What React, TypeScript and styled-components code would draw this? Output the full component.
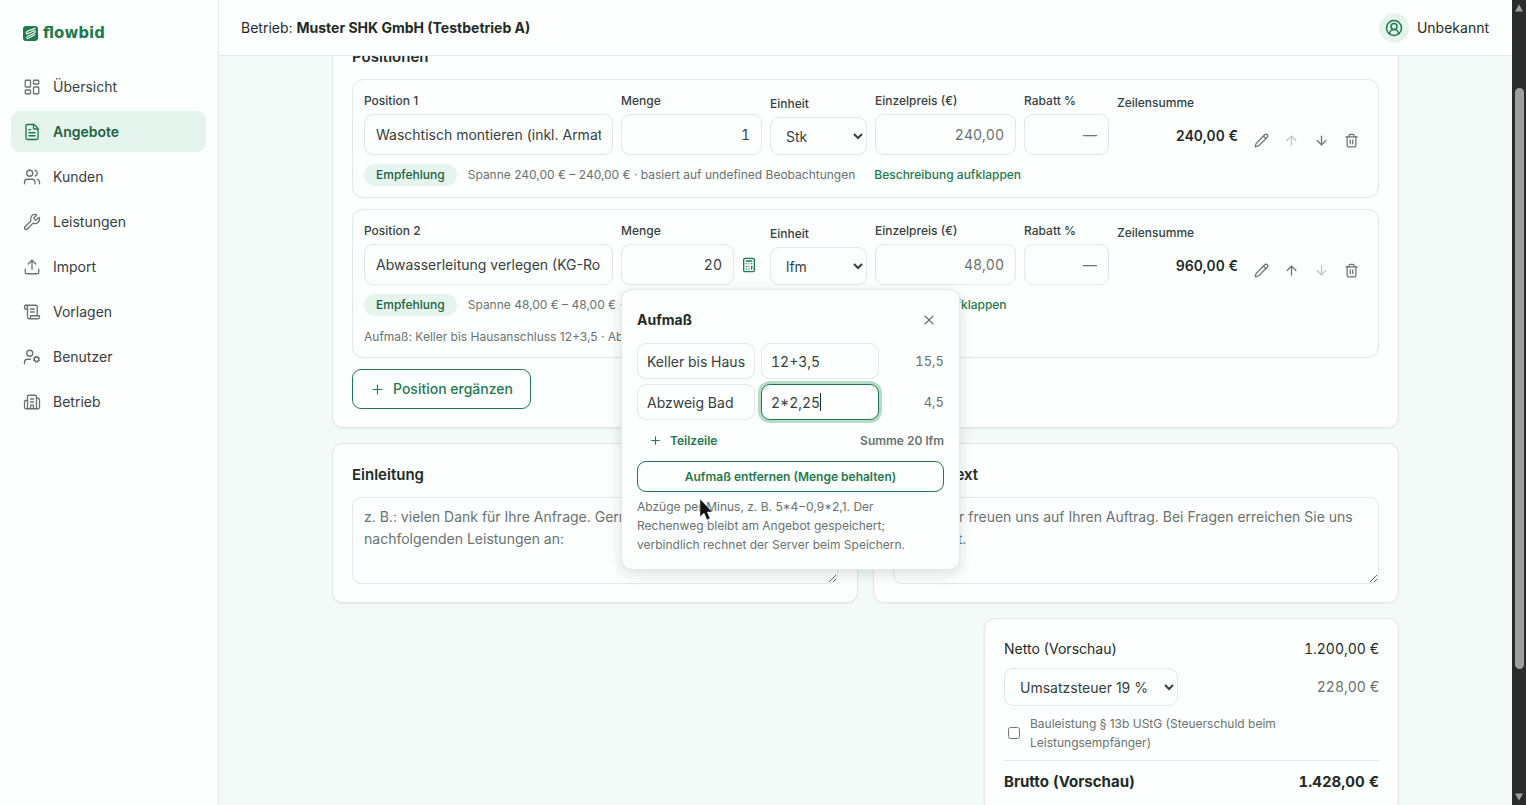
import React, { useState } from "react";
import styled, { createGlobalStyle, css } from "styled-components";
import {
  ArrowDown,
  ArrowUp,
  Building2,
  Calculator,
  CircleUserRound,
  FileText,
  LayoutDashboard,
  Pencil,
  Plus,
  ScrollText,
  Trash2,
  Upload,
  UserCog,
  Users,
  Wrench,
  X,
} from "lucide-react";

const color = {
  ink: "#1e2b27",
  soft: "#36413e",
  muted: "#69736f",
  line: "#e1e8e5",
  green: "#1f7a4d",
  mint: "#e5f4ec",
  surface: "#fdfefe",
  page: "#f3faf7",
};

const Global = createGlobalStyle`
  *, *::before, *::after { box-sizing: border-box; }
  body { margin: 0; background: ${color.page}; }
  body, button, input, select, textarea {
    font-family: Inter, "Liberation Sans", sans-serif;
    font-size: 14px;
    line-height: 22px;
    color: ${color.ink};
  }
`;

const Shell = styled.div`
  display: flex;
  height: 100vh;
  overflow: hidden;
`;

const Sidebar = styled.aside`
  flex: 0 0 219px;
  padding: 22px 12px 0 11px;
  background: ${color.surface};
  border-right: 1px solid ${color.line};
`;

const Brand = styled.a`
  display: flex;
  align-items: center;
  gap: 5px;
  height: 22px;
  margin-bottom: 22px;
  padding-left: 12px;
  color: ${color.green};
  font-family: "DejaVu Sans", sans-serif;
  font-size: 15px;
  font-weight: 700;
  text-decoration: none;
`;

const Nav = styled.nav`
  display: flex;
  flex-direction: column;
  gap: 4px;
`;

const NavLink = styled.a<{ $active?: boolean }>`
  display: flex;
  align-items: center;
  gap: 12px;
  height: 41px;
  padding: 0 12px;
  border-radius: 9px;
  color: ${color.soft};
  text-decoration: none;
  svg { color: ${color.muted}; }
  ${(p) =>
    p.$active &&
    css`
      background: ${color.mint};
      color: #1f6244;
      font-weight: 600;
      svg { color: ${color.green}; }
    `}
`;

const Column = styled.div`
  display: flex;
  flex: 1;
  flex-direction: column;
  min-width: 0;
`;

const Topbar = styled.header`
  display: flex;
  flex: 0 0 56px;
  align-items: center;
  justify-content: space-between;
  padding: 0 23px 0 22px;
  background: ${color.surface};
  border-bottom: 1px solid ${color.line};
`;

const Account = styled.button`
  display: flex;
  align-items: center;
  gap: 8px;
  padding: 0;
  border: 0;
  background: none;
`;

const Avatar = styled.span`
  display: grid;
  place-items: center;
  width: 30px;
  height: 30px;
  border-radius: 50%;
  background: ${color.mint};
  color: ${color.green};
`;

const Viewport = styled.main`
  flex: 1;
  min-height: 0;
  overflow: hidden;
  background: ${color.page};
`;

const Content = styled.form`
  display: flex;
  flex-direction: column;
  gap: 15px;
  max-width: 1067px;
  margin: -31px auto 0;
`;

const Card = styled.section`
  min-width: 0;
  padding: 20px 19px 18px;
  background: ${color.surface};
  border: 1px solid ${color.line};
  border-radius: 11px;
  box-shadow: 0 1px 2px rgba(20, 60, 40, 0.06);
`;

const Heading = styled.h2`
  margin: 0 0 11px;
  font-size: 15px;
  line-height: 22px;
  font-weight: 600;
`;

const Stack = styled.div`
  display: flex;
  flex-direction: column;
  align-items: flex-start;
  gap: 11px;
`;

const PositionBox = styled.fieldset`
  width: 100%;
  min-width: 0;
  margin: 0;
  padding: 12px 11px 11px;
  border: 1px solid ${color.line};
  border-radius: 11px;
`;

const Fields = styled.div`
  display: grid;
  grid-template-columns: minmax(0, 1fr) 141px 97px 141px 85px 121px 121px;
  align-items: end;
  gap: 8px;
`;

const Field = styled.div`
  position: relative;
  display: flex;
  flex-direction: column;
  gap: 4px;
  min-width: 0;
`;

const Label = styled.label`
  font-size: 12px;
  line-height: 18px;
  font-weight: 500;
  color: ${color.soft};
`;

const control = css`
  border: 1px solid ${color.line};
  border-radius: 9px;
  background: ${color.surface};
  color: ${color.soft};
  outline: none;
  &::placeholder { color: ${color.muted}; opacity: 1; }
`;

const Input = styled.input<{ $number?: boolean }>`
  ${control}
  width: 100%;
  min-width: 0;
  height: 41px;
  padding: 0 11px;
  ${(p) =>
    p.$number &&
    css`
      text-align: right;
      font-variant-numeric: tabular-nums;
    `}
`;

const Select = styled.select`
  ${control}
  min-width: 0;
  height: 38px;
  padding: 0 0 0 11px;
`;

const TaxSelect = styled(Select)`
  width: 174px;
`;

const Inline = styled.div`
  display: flex;
  align-items: center;
  gap: 2px;
`;

const IconButton = styled.button<{ $accent?: boolean; $width?: number }>`
  display: grid;
  flex: none;
  place-items: center;
  width: ${(p) => p.$width ?? 30}px;
  height: 30px;
  padding: 0;
  border: 0;
  background: none;
  color: ${(p) => (p.$accent ? color.green : color.muted)};
  &:disabled { opacity: 0.4; }
`;

const LineTotal = styled.output`
  height: 39px;
  line-height: 39px;
  font-weight: 600;
  font-variant-numeric: tabular-nums;
  text-align: right;
`;

const Actions = styled.div`
  display: flex;
  justify-content: space-between;
`;

const Hint = styled.div`
  display: flex;
  align-items: center;
  gap: 11px;
  margin-top: 9px;
  font-size: 12px;
  line-height: 22px;
  color: ${color.muted};
`;

const Pill = styled.span`
  padding: 0 12px;
  border-radius: 11px;
  background: ${color.mint};
  color: #1f6244;
  font-weight: 500;
`;

const TextLink = styled.a`
  margin-left: 8px;
  color: ${color.green};
  font-weight: 500;
  text-decoration: none;
`;

const Trail = styled.p`
  margin: 12px 0 0;
  font-size: 12px;
  line-height: 18px;
  color: ${color.muted};
`;

const OutlineButton = styled.button<{ $small?: boolean }>`
  display: flex;
  align-items: center;
  justify-content: center;
  gap: 8px;
  height: ${(p) => (p.$small ? 31 : 40)}px;
  padding: 0 17px;
  border: 1px solid ${color.green};
  border-radius: 9px;
  background: ${color.surface};
  color: ${color.green};
  font-size: ${(p) => (p.$small ? 12 : 14)}px;
  font-weight: ${(p) => (p.$small ? 600 : 500)};
`;

const Popover = styled.div`
  position: absolute;
  top: calc(100% + 4px);
  left: 0;
  z-index: 2;
  display: flex;
  flex-direction: column;
  gap: 5px;
  width: 339px;
  padding: 15px;
  background: ${color.surface};
  border: 1px solid ${color.line};
  border-radius: 11px;
  box-shadow: 0 4px 14px rgba(20, 50, 40, 0.14);
`;

const PopoverHead = styled.div`
  display: flex;
  align-items: center;
  justify-content: space-between;
  height: 30px;
  margin-bottom: 3px;
  font-weight: 700;
`;

const MeasureRow = styled.div`
  display: grid;
  grid-template-columns: 118px 118px 1fr;
  align-items: center;
  gap: 6px;
`;

const MeasureCell = styled.div`
  position: relative;
`;

const MeasureInput = styled(Input)<{ $focus?: boolean }>`
  display: block;
  height: 36px;
  padding: 0 9px;
  font-variant-numeric: tabular-nums;
  ${(p) =>
    p.$focus &&
    css`
      border-color: ${color.green};
      box-shadow: 0 0 0 3px #b5dcc7;
    `}
`;

const Caret = styled.span`
  position: absolute;
  top: 9px;
  left: 59px;
  width: 1px;
  height: 18px;
  background: ${color.ink};
`;

const Result = styled.output`
  font-size: 13px;
  font-variant-numeric: tabular-nums;
  color: ${color.muted};
  text-align: right;
`;

const SumRow = styled.div`
  display: flex;
  align-items: center;
  justify-content: space-between;
  height: 31px;
  font-size: 12px;
  font-weight: 600;
  color: ${color.muted};
`;

const AddLine = styled.button`
  display: flex;
  align-items: center;
  gap: 8px;
  padding: 0 12px;
  border: 0;
  background: none;
  color: ${color.green};
  font-size: 12px;
  font-weight: 600;
`;

const Note = styled.p`
  margin: 0;
  padding-right: 15px;
  font-size: 12px;
  line-height: 19px;
  color: ${color.muted};
`;

const Pointer = styled.svg`
  position: absolute;
  top: 208px;
  left: 76px;
`;

const Pair = styled.div`
  display: grid;
  grid-template-columns: 1fr 1fr;
  gap: 15px;
`;

const TextArea = styled.textarea`
  ${control}
  display: block;
  width: 100%;
  height: 87px;
  padding: 8px 11px;
`;

const Totals = styled(Card)`
  display: flex;
  flex-direction: column;
  align-self: flex-end;
  gap: 8px;
  width: 415px;
  padding-top: 19px;
`;

const TotalRow = styled.div<{ $muted?: boolean; $strong?: boolean }>`
  display: flex;
  align-items: center;
  justify-content: space-between;
  font-variant-numeric: tabular-nums;
  color: ${(p) => (p.$muted ? color.muted : color.ink)};
  ${(p) =>
    p.$strong &&
    css`
      padding-top: 10px;
      border-top: 1px solid ${color.line};
      font-size: 15px;
      font-weight: 700;
    `}
`;

const CheckLabel = styled.label`
  display: flex;
  align-items: center;
  gap: 10px;
  padding: 0 60px 0 4px;
  font-size: 12px;
  line-height: 19px;
  color: ${color.muted};
  input { flex: none; width: 12px; height: 12px; margin: 0; }
`;

const Scrollbar = styled.div`
  display: flex;
  flex: 0 0 14px;
  flex-direction: column;
  align-items: center;
  padding: 4px 0;
  background: #2b2b2b;
`;

const Thumb = styled.div`
  flex: 578;
  width: 9px;
  border-radius: 5px;
  background: #9f9f9f;
`;

const Space = styled.div<{ $grow: number }>`
  flex: ${(p) => p.$grow};
`;

const nav = [
  { text: "Übersicht", Icon: LayoutDashboard },
  { text: "Angebote", Icon: FileText, active: true },
  { text: "Kunden", Icon: Users },
  { text: "Leistungen", Icon: Wrench },
  { text: "Import", Icon: Upload },
  { text: "Vorlagen", Icon: ScrollText },
  { text: "Benutzer", Icon: UserCog },
  { text: "Betrieb", Icon: Building2 },
];

function Logo() {
  return (
    <svg width="15" height="15" viewBox="0 0 15 15" aria-hidden="true">
      <rect width="15" height="15" rx="3" fill="#1f7a4d" />
      <path
        d="M12 2.200C9 4.200 6 3.600 3.600 6C2.400 7.600 3.600 8.400 5 7.600L10.400 4.900C12.600 4.200 13 6 11.200 7L4.800 10.200C3 11.400 3.800 13 5.800 12L11.800 8.800"
        fill="none"
        stroke="#fff"
        strokeWidth="1.100"
        strokeLinecap="round"
      />
    </svg>
  );
}

function Measurements() {
  const [rows, setRows] = useState([
    { name: "Keller bis Hausanschluss", term: "12+3,5", result: "15,5" },
    { name: "Abzweig Bad", term: "2*2,25", result: "4,5" },
  ]);
  const edit = (index: number, patch: { name?: string; term?: string }) =>
    setRows(rows.map((row, i) => (i === index ? { ...row, ...patch } : row)));
  return (
    <Popover role="dialog" aria-label="Aufmaß">
      <PopoverHead>
        Aufmaß
        <IconButton type="button" aria-label="Schließen">
          <X size={16} strokeWidth={1.75} />
        </IconButton>
      </PopoverHead>
      {rows.map((row, i) => (
        <MeasureRow key={i}>
          <MeasureInput
            aria-label="Bezeichnung"
            value={row.name}
            onChange={(e) => edit(i, { name: e.target.value })}
          />
          <MeasureCell>
            <MeasureInput
              aria-label="Rechenweg"
              $focus={i === 1}
              value={row.term}
              onChange={(e) => edit(i, { term: e.target.value })}
            />
            {i === 1 && <Caret />}
          </MeasureCell>
          <Result>{row.result}</Result>
        </MeasureRow>
      ))}
      <SumRow>
        <AddLine type="button">
          <Plus size={13} strokeWidth={2} />
          Teilzeile
        </AddLine>
        <span>Summe 20 lfm</span>
      </SumRow>
      <OutlineButton type="button" $small>
        Aufmaß entfernen (Menge behalten)
      </OutlineButton>
      <Note>
        Abzüge per Minus, z. B. 5*4−0,9*2,1. Der Rechenweg bleibt am Angebot
        gespeichert; verbindlich rechnet der Server beim Speichern.
      </Note>
      <Pointer width="16" height="24" viewBox="0 0 16 24" aria-hidden="true">
        <path
          d="M2 1V19L6 15L9 22L12 20.500L9.300 14H14.500Z"
          fill="#111"
          stroke="#fff"
          strokeWidth="0.500"
        />
      </Pointer>
    </Popover>
  );
}

type PositionProps = {
  no: number;
  title: string;
  amount: string;
  unit: string;
  price: string;
  total: string;
  trail?: string;
  first?: boolean;
  last?: boolean;
};

function Position({ no, title, amount, unit, price, total, trail, first, last }: PositionProps) {
  const id = (name: string) => `${name}-${no}`;
  return (
    <PositionBox>
      <Fields>
        <Field>
          <Label htmlFor={id("title")}>Position {no}</Label>
          <Input id={id("title")} defaultValue={title} />
        </Field>
        <Field>
          <Label htmlFor={id("amount")}>Menge</Label>
          <Inline>
            <Input id={id("amount")} $number defaultValue={amount} />
            {trail && (
              <IconButton type="button" $accent $width={26} aria-label="Aufmaß öffnen">
                <Calculator size={16} strokeWidth={2} />
              </IconButton>
            )}
          </Inline>
          {trail && <Measurements />}
        </Field>
        <Field>
          <Label htmlFor={id("unit")}>Einheit</Label>
          <Select id={id("unit")} defaultValue={unit}>
            <option>Stk</option>
            <option>lfm</option>
          </Select>
        </Field>
        <Field>
          <Label htmlFor={id("price")}>Einzelpreis (€)</Label>
          <Input id={id("price")} $number placeholder={price} />
        </Field>
        <Field>
          <Label htmlFor={id("discount")}>Rabatt %</Label>
          <Input id={id("discount")} $number placeholder="—" />
        </Field>
        <Field>
          <Label htmlFor={id("total")}>Zeilensumme</Label>
          <LineTotal id={id("total")}>{total}</LineTotal>
        </Field>
        <Actions>
          <IconButton type="button" aria-label="Bearbeiten">
            <Pencil size={15} strokeWidth={2} />
          </IconButton>
          <IconButton type="button" aria-label="Nach oben" disabled={first}>
            <ArrowUp size={15} strokeWidth={2} />
          </IconButton>
          <IconButton type="button" aria-label="Nach unten" disabled={last}>
            <ArrowDown size={15} strokeWidth={2} />
          </IconButton>
          <IconButton type="button" aria-label="Löschen">
            <Trash2 size={15} strokeWidth={2} />
          </IconButton>
        </Actions>
      </Fields>
      <Hint>
        <Pill>Empfehlung</Pill>
        <span>
          Spanne {price} € – {price} € · basiert auf undefined Beobachtungen
        </span>
        <TextLink href="#beschreibung">Beschreibung aufklappen</TextLink>
      </Hint>
      {trail && <Trail>{trail}</Trail>}
    </PositionBox>
  );
}

export default function App() {
  return (
    <>
      <Global />
      <Shell>
        <Sidebar>
          <Brand href="#start">
            <Logo />
            flowbid
          </Brand>
          <Nav>
            {nav.map(({ text, Icon, active }) => (
              <NavLink key={text} href={`#${text}`} $active={active}>
                <Icon size={18} strokeWidth={1.75} />
                {text}
              </NavLink>
            ))}
          </Nav>
        </Sidebar>
        <Column>
          <Topbar>
            <span>
              Betrieb: <b>Muster SHK GmbH (Testbetrieb A)</b>
            </span>
            <Account type="button">
              <Avatar>
                <CircleUserRound size={18} strokeWidth={2} />
              </Avatar>
              Unbekannt
            </Account>
          </Topbar>
          <Viewport>
            <Content>
              <Card>
                <Heading>Positionen</Heading>
                <Stack>
                  <Position
                    no={1}
                    title="Waschtisch montieren (inkl. Armatur)"
                    amount="1"
                    unit="Stk"
                    price="240,00"
                    total="240,00 €"
                    first
                  />
                  <Position
                    no={2}
                    title="Abwasserleitung verlegen (KG-Rohr)"
                    amount="20"
                    unit="lfm"
                    price="48,00"
                    total="960,00 €"
                    trail="Aufmaß: Keller bis Hausanschluss 12+3,5 · Abzweig Bad 2*2,25"
                    last
                  />
                  <OutlineButton type="button">
                    <Plus size={15} strokeWidth={1.75} />
                    Position ergänzen
                  </OutlineButton>
                </Stack>
              </Card>
              <Pair>
                <Card>
                  <Heading id="intro">Einleitung</Heading>
                  <TextArea
                    aria-labelledby="intro"
                    placeholder="z. B.: vielen Dank für Ihre Anfrage. Gern unterbreiten wir Ihnen die nachfolgenden Leistungen an:"
                  />
                </Card>
                <Card>
                  <Heading id="outro">Schlusstext</Heading>
                  <TextArea
                    aria-labelledby="outro"
                    placeholder="z. B.: Wir freuen uns auf Ihren Auftrag. Bei Fragen erreichen Sie uns jederzeit."
                  />
                </Card>
              </Pair>
              <Totals>
                <TotalRow>
                  <span>Netto (Vorschau)</span>
                  <span>1.200,00 €</span>
                </TotalRow>
                <TotalRow $muted>
                  <TaxSelect aria-label="Umsatzsteuer">
                    <option>Umsatzsteuer 19 %</option>
                  </TaxSelect>
                  <span>228,00 €</span>
                </TotalRow>
                <CheckLabel>
                  <input type="checkbox" />
                  Bauleistung § 13b UStG (Steuerschuld beim Leistungsempfänger)
                </CheckLabel>
                <TotalRow $strong>
                  <span>Brutto (Vorschau)</span>
                  <span>1.428,00 €</span>
                </TotalRow>
              </Totals>
            </Content>
          </Viewport>
        </Column>
        <Scrollbar aria-hidden="true">
          <svg width="8" height="8" viewBox="0 0 8 8">
            <path d="M4 0.500L8 7.500H0Z" fill="#9f9f9f" />
          </svg>
          <Space $grow={76} />
          <Thumb />
          <Space $grow={123} />
          <svg width="8" height="8" viewBox="0 0 8 8">
            <path d="M4 7.500L8 0.500H0Z" fill="#9f9f9f" />
          </svg>
        </Scrollbar>
      </Shell>
    </>
  );
}
